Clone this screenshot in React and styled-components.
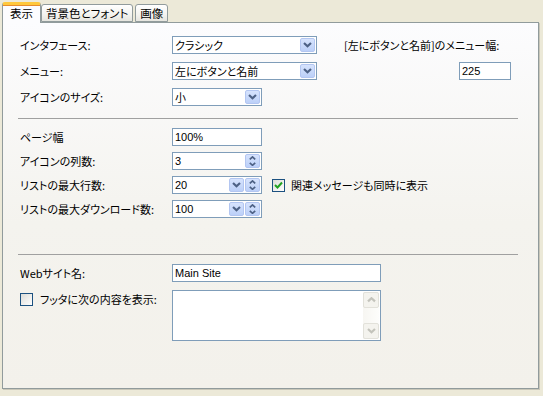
import React from 'react';
import styled, { createGlobalStyle } from 'styled-components';

const GlobalStyle = createGlobalStyle`
  html, body {
    margin: 0;
    padding: 0;
    background: #ece9d8;
  }
  body {
    font-family: "Noto Sans CJK JP", "Liberation Sans", sans-serif;
    font-size: 11px;
    color: #000;
    font-feature-settings: "palt";
  }
`;

const Window = styled.div`
  width: 543px;
  height: 396px;
  padding: 2px 0 0 2px;
  box-sizing: border-box;
  background: #ece9d8;
`;

// Tabs
const TabStrip = styled.div`
  display: flex;
  align-items: flex-end;
  height: 20px;
  position: relative;
  z-index: 2;
`;

const Tab = styled.div`
  box-sizing: border-box;
  height: ${p => (p.$active ? '21px' : '18px')};
  margin-bottom: ${p => (p.$active ? '-1px' : '0')};
  padding: 0 ${p => (p.$active ? '7px' : '4px')};
  margin-right: ${p => (p.$active ? '0' : '2px')};
  display: flex;
  align-items: center;
  line-height: 1;
  font-size: 11.5px;
  border: 1px solid #919b9c;
  border-bottom: ${p => (p.$active ? 'none' : '1px solid #919b9c')};
  border-radius: 3px 3px 0 0;
  background: ${p => (p.$active ? '#fcfcfe' : 'linear-gradient(#ffffff, #f3f3ef 60%, #e6e5df)')};
  border-top: ${p => (p.$active ? '3px solid #ffc83c' : '1px solid #919b9c')};
  box-shadow: ${p => (p.$active ? 'inset 0 1px 0 #e68b2c' : 'none')};
  padding-top: ${p => (p.$active ? '0' : '1px')};
`;

const Panel = styled.div`
  width: 537px;
  height: 367px;
  box-sizing: border-box;
  border: 1px solid #919b9c;
  background: linear-gradient(#fcfcfe, #f4f3ee 55%, #f3f1eb);
  box-shadow: 1px 1px 0 #c9c7b9;
  padding: 13px 20px 0 15px;
  position: relative;
  z-index: 1;
`;

const Grid = styled.div`
  display: grid;
  grid-template-columns: 152px ${p => p.$ctl || 145}px 1fr;
  row-gap: ${p => p.$gap || '8px'};
  align-items: center;
  padding-left: 2px;
`;

const Label = styled.div`
  line-height: 18px;
  height: 18px;
  white-space: nowrap;
  align-self: ${p => (p.$top ? 'start' : 'center')};
  display: flex;
  align-items: center;
  gap: 7px;
`;

const Separator = styled.div`
  height: 0;
  border-top: 1px solid #a0a0a0;
  margin: ${p => p.$margin};
`;

const Field = styled.div`
  box-sizing: border-box;
  width: ${p => p.$w}px;
  height: ${p => p.$h || 18}px;
  border: 1px solid #7f9db9;
  background: #fff;
  display: flex;
  align-items: ${p => (p.$multi ? 'stretch' : 'center')};
  padding: 0 1px 0 2px;
  line-height: 1;
  justify-self: ${p => (p.$end ? 'end' : 'start')};
  margin-right: ${p => (p.$end ? '7px' : '0')};
`;

const FieldText = styled.span`
  flex: 1;
  white-space: nowrap;
  font-family: ${p => (p.$latin ? '"Liberation Sans", sans-serif' : 'inherit')};
  font-size: 11px;
`;

const ArrowButton = styled.div`
  box-sizing: border-box;
  width: 15px;
  height: 14px;
  margin-left: 1px;
  border: 1px solid #b3c6f1;
  border-radius: 2px;
  background: linear-gradient(#d6e3fd, #bcd0f8);
  display: flex;
  flex-direction: column;
  align-items: center;
  justify-content: center;
`;

const ScrollBar = styled.div`
  width: 16px;
  display: flex;
  flex-direction: column;
  justify-content: space-between;
  background: linear-gradient(90deg, #f7f6f2, #fdfdfb);
  margin: 1px 0;
`;

const ScrollButton = styled.div`
  box-sizing: border-box;
  height: 16px;
  border: 1px solid #e2e1da;
  border-radius: 2px;
  background: #f4f3ee;
  display: flex;
  align-items: center;
  justify-content: center;
`;

const Check = styled.div`
  box-sizing: border-box;
  width: 13px;
  height: 13px;
  border: 1px solid #1c5180;
  background: linear-gradient(135deg, #dcdcd7, #ffffff);
  display: flex;
  align-items: center;
  justify-content: center;
  flex-shrink: 0;
`;

const CheckRow = styled.div`
  display: flex;
  align-items: center;
  gap: 6px;
  margin-left: 10px;
  white-space: nowrap;
`;

const RightNote = styled.div`
  margin-left: 27px;
  white-space: nowrap;
`;

const Down = ({ color = '#4d6185', size = 9 }) => (
  <svg width={size} height={size * 0.6} viewBox="0 0 9 5.4">
    <polyline points="1,1 4.5,4.2 8,1" fill="none" stroke={color} strokeWidth="2.2" />
  </svg>
);

const Up = ({ color = '#4d6185', size = 9 }) => (
  <svg width={size} height={size * 0.6} viewBox="0 0 9 5.4">
    <polyline points="1,4.4 4.5,1.2 8,4.4" fill="none" stroke={color} strokeWidth="2.2" />
  </svg>
);

const Select = ({ w, value }) => (
  <Field $w={w}>
    <FieldText>{value}</FieldText>
    <ArrowButton>
      <Down />
    </ArrowButton>
  </Field>
);

const Spin = ({ w, value, drop }) => (
  <Field $w={w}>
    <FieldText $latin>{value}</FieldText>
    {drop && (
      <ArrowButton>
        <Down />
      </ArrowButton>
    )}
    <ArrowButton style={{ gap: 2 }}>
      <Up size={7} />
      <Down size={7} />
    </ArrowButton>
  </Field>
);

export default function App() {
  return (
    <>
      <GlobalStyle />
      <Window>
        <TabStrip>
          <Tab $active>表示</Tab>
          <Tab>背景色とフォント</Tab>
          <Tab>画像</Tab>
        </TabStrip>
        <Panel>
          <Grid>
            <Label>インタフェース:</Label>
            <Select w={145} value="クラシック" />
            <RightNote>[左にボタンと名前]のメニュー幅:</RightNote>

            <Label>メニュー:</Label>
            <Select w={145} value="左にボタンと名前" />
            <Field $w={52} $end>
              <FieldText $latin>225</FieldText>
            </Field>

            <Label>アイコンのサイズ:</Label>
            <Select w={90} value="小" />
            <div />
          </Grid>

          <Separator $margin="12px 0 9px" />

          <Grid $gap="6px" $ctl={90}>
            <Label>ページ幅</Label>
            <Field $w={90}>
              <FieldText $latin>100%</FieldText>
            </Field>
            <div />

            <Label>アイコンの列数:</Label>
            <Spin w={90} value="3" />
            <div />

            <Label>リストの最大行数:</Label>
            <Spin w={90} value="20" drop />
            <CheckRow>
              <Check>
                <svg width="9" height="8" viewBox="0 0 9 8">
                  <polyline points="1,4 3.5,6.5 8,1.5" fill="none" stroke="#21a121" strokeWidth="2" />
                </svg>
              </Check>
              関連メッセージも同時に表示
            </CheckRow>

            <Label>リストの最大ダウンロード数:</Label>
            <Spin w={90} value="100" drop />
            <div />
          </Grid>

          <Separator $margin="36px 0 9px" />

          <Grid $gap="8px" $ctl={209}>
            <Label>Webサイト名:</Label>
            <Field $w={209}>
              <FieldText $latin>Main Site</FieldText>
            </Field>
            <div />

            <Label $top>
              <Check />
              フッタに次の内容を表示:
            </Label>
            <Field $w={209} $h={51} $multi>
              <FieldText />
              <ScrollBar>
                <ScrollButton>
                  <Up color="#c3c3bb" size={9} />
                </ScrollButton>
                <ScrollButton>
                  <Down color="#c3c3bb" size={9} />
                </ScrollButton>
              </ScrollBar>
            </Field>
            <div />
          </Grid>
        </Panel>
      </Window>
    </>
  );
}
